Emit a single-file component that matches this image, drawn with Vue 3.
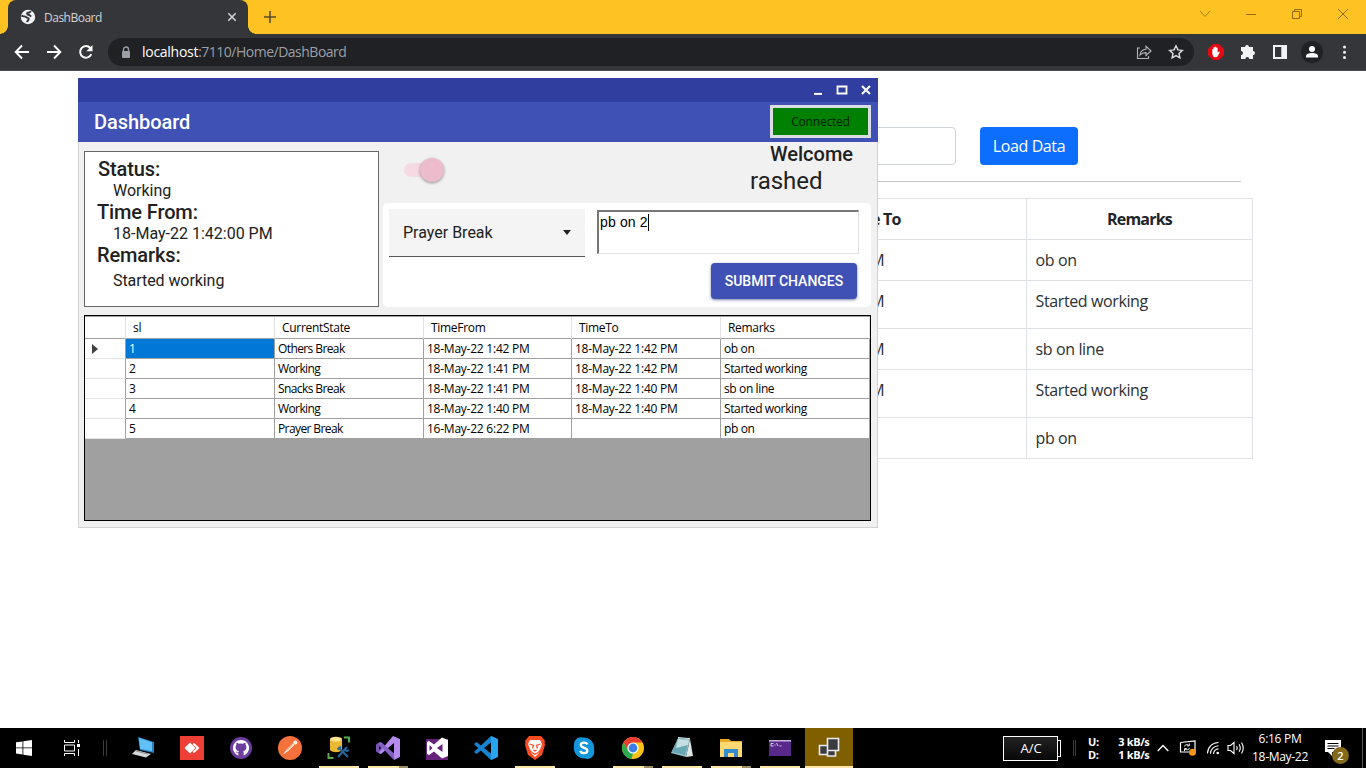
<script setup>
const pageRows = [
  { to: 'PM', remarks: 'ob on', tall: false },
  { to: 'PM', remarks: 'Started working', tall: true },
  { to: 'PM', remarks: 'sb on line', tall: false },
  { to: 'PM', remarks: 'Started working', tall: true },
  { to: '', remarks: 'pb on', tall: false },
]
const gridHeads = ['sl', 'CurrentState', 'TimeFrom', 'TimeTo', 'Remarks']
const gridRows = [
  ['1', 'Others Break', '18-May-22 1:42 PM', '18-May-22 1:42 PM', 'ob on'],
  ['2', 'Working', '18-May-22 1:41 PM', '18-May-22 1:42 PM', 'Started working'],
  ['3', 'Snacks Break', '18-May-22 1:41 PM', '18-May-22 1:40 PM', 'sb on line'],
  ['4', 'Working', '18-May-22 1:40 PM', '18-May-22 1:40 PM', 'Started working'],
  ['5', 'Prayer Break', '16-May-22 6:22 PM', '', 'pb on'],
]
</script>

<template>
  <div class="screen">
    <header class="tabstrip">
      <div class="tab">
        <svg class="globe" viewBox="0 0 16 16"><circle cx="8" cy="8" r="7.2" fill="#f1f3f4"/><path d="M1.500 6.500c1.700 1.500 3.600.4 4.700 1.600 1 1.200 2.600.5 2.600 1.900 0 1.200-1.600 1.200-1.800 3.200M10.500 2c0 1.700-1.300 1.500-2.700 1.700-1.200.3-.8 1.900.5 2 1.800.1 1.700 1.300 3 1.700" fill="none" stroke="#35363a" stroke-width="1.900"/></svg>
        <span class="tab-title">DashBoard</span>
        <svg class="tab-close" viewBox="0 0 10 10"><path d="M1.300 1.300l7.400 7.400M8.700 1.300L1.300 8.700" stroke="#d5d7da" stroke-width="1.500"/></svg>
      </div>
      <svg class="plus" viewBox="0 0 12 12"><path d="M6 0v12M0 6h12" stroke="#5b4c22" stroke-width="1.600"/></svg>
      <div class="winctl">
        <svg viewBox="0 0 12 12"><path d="M1 3l5 5.500L11 3" fill="none" stroke="#a57d19"/></svg>
        <svg viewBox="0 0 12 12"><path d="M1 6.500h10" stroke="#8d6b17"/></svg>
        <svg viewBox="0 0 12 12"><path d="M1.500 3.500h7v7h-7zM3.500 3.500v-2h7v7h-2" fill="none" stroke="#8d6b17"/></svg>
        <svg viewBox="0 0 12 12"><path d="M1 1l10 10M11 1L1 11" stroke="#8d6b17"/></svg>
      </div>
    </header>

    <div class="toolbar">
      <span class="tb"><svg viewBox="0 0 16 16"><path d="M15 8H2M8 1.500L1.700 8 8 14.500" fill="none" stroke="#fff" stroke-width="1.900"/></svg></span>
      <span class="tb"><svg viewBox="0 0 16 16"><path d="M1 8h13M8 1.500L14.300 8 8 14.500" fill="none" stroke="#fff" stroke-width="1.900"/></svg></span>
      <span class="tb"><svg viewBox="0 0 16 16"><path d="M13.300 10.200A5.800 5.800 0 1 1 12.300 4" fill="none" stroke="#fff" stroke-width="2"/><path d="M14.500 1v6.200H8.300z" fill="#fff"/></svg></span>
      <div class="omnibox">
        <svg class="lock" viewBox="0 0 10 13"><path d="M2.500 6V3.500a2.500 2.500 0 0 1 5 0V6" fill="none" stroke="#9aa0a6" stroke-width="1.400"/><rect x="1" y="5" width="8" height="7" rx="1" fill="#9aa0a6"/></svg>
        <span class="url"><b>localhost</b>:7110/Home/DashBoard</span>
        <span class="tb"><svg viewBox="0 0 16 16"><path d="M4 4H1.500v10.500h11v-2.500" fill="none" stroke="#b4b7ba" stroke-width="1.100"/><path d="M4 11c.5-4 2.500-5.700 6-5.800V2.300L15 7l-5 4.500V8.600C7.500 8.500 5.700 9 4 11z" fill="none" stroke="#b4b7ba" stroke-width="1.100"/></svg></span>
        <span class="tb"><svg viewBox="0 0 16 16"><path d="M8 1.800l1.900 4.100 4.400.5-3.300 3 .9 4.400L8 11.600l-3.900 2.200.9-4.400-3.300-3 4.400-.5z" fill="none" stroke="#dee1e4" stroke-width="1.400"/></svg></span>
      </div>
      <span class="tb"><svg viewBox="0 0 16 16"><path d="M5 0h6l5 5v6l-5 5H5l-5-5V5z" fill="#e30b13"/><path d="M4.300 8.500V5.300q.6-.8 1.200 0V3.600q.6-.8 1.300 0V3q.7-.8 1.400 0v.8q.7-.8 1.400 0v5l1.300-1.300q1-.3.900.6L9.900 12q-.8 1.200-2.600 1.200c-2 0-3-1.500-3-4.700z" fill="#fff"/></svg></span>
      <span class="tb"><svg viewBox="0 0 16 16"><path d="M5 3a2 2 0 0 1 4 0h4v4a2 2 0 1 1 0 4v4H9.300a2 2 0 0 0-4 0H1v-4a2 2 0 0 0 0-4V3z" fill="#f1f3f4"/></svg></span>
      <span class="tb"><svg viewBox="0 0 16 16"><path d="M1 1h14v14H1z" fill="#f1f3f4"/><path d="M3 3h6.300v10H3z" fill="#35363a"/></svg></span>
      <span class="tb avatar"><svg viewBox="0 0 22 22"><circle cx="11" cy="11" r="11" fill="#202124"/><circle cx="11" cy="8" r="3" fill="#fff"/><path d="M5 16.500v-1.200C5 13 8 12 11 12s6 1 6 3.300v1.200z" fill="#fff"/></svg></span>
      <span class="tb"><svg viewBox="0 0 16 16" fill="#f1f3f4"><circle cx="8.500" cy="3" r="1.500"/><circle cx="8.500" cy="8.200" r="1.500"/><circle cx="8.500" cy="13.400" r="1.500"/></svg></span>
    </div>

    <main class="page">
      <div class="controls"><div class="field"></div><div class="load">Load Data</div></div>
      <div class="rule"></div>
      <div class="ptable">
        <div class="prow head"><div>Time To</div><div>Remarks</div></div>
        <div v-for="(r, i) in pageRows" :key="i" class="prow" :class="{ tall: r.tall }">
          <div class="to">{{ r.to }}</div><div>{{ r.remarks }}</div>
        </div>
      </div>
    </main>

    <section class="window">
      <div class="titlebar">
        <svg viewBox="0 0 12 12"><path d="M2 9.900h8" stroke="#fff" stroke-width="2"/></svg>
        <svg viewBox="0 0 12 12"><path d="M1.500 2.500h9v7h-9z" fill="none" stroke="#fff" stroke-width="1.800"/></svg>
        <svg viewBox="0 0 12 12"><path d="M2 2l8 8M10 2l-8 8" stroke="#fff" stroke-width="2"/></svg>
      </div>
      <div class="appbar"><span class="app-title">Dashboard</span><div class="connected">Connected</div></div>
      <div class="wbody">
        <div class="upper">
          <div class="status">
            <div class="label l1">Status:</div><div class="value">Working</div>
            <div class="label">Time From:</div><div class="value">18-May-22 1:42:00 PM</div>
            <div class="label">Remarks:</div><div class="value last">Started working</div>
          </div>
          <div class="right">
            <div class="greet">
              <div class="switch"><i></i></div>
              <div class="who"><div class="welcome">Welcome</div><div class="user">rashed</div></div>
            </div>
            <div class="form">
              <div class="frow">
                <div class="select"><span>Prayer Break</span><svg viewBox="0 0 8 5"><path d="M0 0h8L4 5z" fill="#222"/></svg></div>
                <div class="memo"><span>pb on 2</span></div>
              </div>
              <div class="submit">SUBMIT CHANGES</div>
            </div>
          </div>
        </div>
        <div class="dgrid">
          <div class="grow ghead"><div></div><div v-for="h in gridHeads" :key="h">{{ h }}</div></div>
          <div v-for="(r, i) in gridRows" :key="i" class="grow">
            <div class="rh"><svg v-if="i === 0" viewBox="0 0 6 10"><path d="M0 0l6 5-6 5z" fill="#404040"/></svg></div>
            <div v-for="(c, j) in r" :key="j" :class="['c' + j, { sel: i === 0 && j === 0 }]">{{ c }}</div>
          </div>
        </div>
      </div>
    </section>

    <footer class="taskbar">
      <div class="start">
        <svg class="i16" viewBox="0 0 16 16"><path d="M0 2.300l6.500-.9v6.100H0zM7.300 1.300L16 0v7.500H7.300zM0 8.300h6.500v6.200L0 13.600zM7.300 8.300H16V16l-8.700-1.300z" fill="#fff"/></svg>
      </div>
      <div class="start">
        <svg class="i16" viewBox="0 0 16 16"><path d="M.5 0v2.500h10V0M.5 16v-2.500h10V16M.5 5h10v6H.5zM14.500 0v3M14.500 9v7" fill="none" stroke="#fff"/><path d="M13 4h3v3h-3z" fill="#fff"/></svg>
      </div>
      <div class="grip"></div>
      <div class="apps">
        <div class="app"><svg viewBox="0 0 24 24"><path d="M7 1l16 5v11L9 14z" fill="#2584bf"/><path d="M8 2l13 4.300v9L9 12.700z" fill="#63c0f4"/><path d="M5 14l15 4-5 3.500L1 18z" fill="#d4d9dc"/><path d="M5 15l12 3" stroke="#87939b"/></svg></div>
        <div class="app"><svg viewBox="0 0 24 24"><path d="M0 0h24v24H0z" fill="#ef4035"/><path d="M4.500 12L10 6.500l5.500 5.500-5.500 5.500z" fill="#fff"/><path d="M13.300 7.500L18 12l-4.700 4.500" fill="none" stroke="#fff" stroke-width="2"/></svg></div>
        <div class="app"><svg viewBox="0 0 24 24"><circle cx="12" cy="12" r="11" fill="#6e3d9e"/><path d="M12 4a8 8 0 0 0-2.600 15.500v-2c-2 .3-2.600-.8-3-1.500 1.500-.2 1.400 1 3 .6 0-.7.300-1.200.6-1.500-2-.3-3.400-1.400-3.400-3.800 0-1 .3-1.800.9-2.400-.3-1 .1-1.900.2-2 .9 0 1.600.4 2.200.9a8 8 0 0 1 4.200 0c.600-.5 1.300-.9 2.200-.9.1.1.5 1 .2 2 .6.600.9 1.400.9 2.400 0 2.400-1.400 3.500-3.400 3.800.4.400.6 1 .6 1.800v2.600A8 8 0 0 0 12 4z" fill="#6e3d9e"/><path d="M9.400 19.500A8 8 0 1 1 14.600 19.500v-2.900c0-.8-.2-1.300-.6-1.600 2-.3 3.400-1.400 3.400-3.800 0-1-.3-1.800-.9-2.400.2-.8.1-1.500-.2-2-.9 0-1.600.4-2.200.9a8 8 0 0 0-4.200 0c-.6-.5-1.300-.9-2.200-.9-.3.500-.4 1.200-.2 2-.6.600-.9 1.400-.9 2.400 0 2.400 1.400 3.500 3.400 3.800-.3.300-.5.700-.6 1.300-1.500.4-2-.6-2.600-1.200 0 1.200 1 2.400 2.600 2.200z" fill="#fff"/></svg></div>
        <div class="app"><svg viewBox="0 0 24 24"><circle cx="12" cy="12" r="12" fill="#f4713b"/><path d="M5 18.500l3.500-5L15 7.200l1.500 1.600-6.300 6.200z" fill="#fff3e8"/><circle cx="17.300" cy="6.500" r="2" fill="#fff3e8"/><path d="M8.500 14.500l6-5.500" stroke="#e7854f" stroke-width=".8"/></svg></div>
        <div class="app run"><svg viewBox="0 0 24 24"><path d="M3 3v11c3 3 9 3 12 0V3z" fill="#ecb731"/><ellipse cx="9" cy="3.300" rx="6" ry="2.500" fill="#ffe38a"/><path d="M17 1.500h5v5M1.500 17v5h5" fill="none" stroke="#55a94a" stroke-width="2"/><path d="M12 12l9 9M20 11l-9 10M10.500 13.500l3.500-3M18 13c0 2 2 2.500 4 1" fill="none" stroke="#2468a0" stroke-width="2.100"/></svg></div>
        <div class="app run stack"><svg viewBox="0 0 24 24"><path d="M0 8.500L4 6l3 2v8l-3 2-4-2.500z" fill="#7655b7"/><path d="M3 10v4l2-2z" fill="#000"/><path d="M17 0l7 3v18l-6 3V7L5 18l-2-1.500z" fill="#b58bee"/><path d="M2 7.500L5 6l13 11.500V24z" fill="#8661c5"/></svg></div>
        <div class="app"><svg viewBox="0 0 24 24"><path d="M1 3h22v21H1z" fill="#68217a"/><path d="M17 1.500l6 2.500v16l-6 2.500-8-7-5 3.500-2-1V6l2-1 5 3.500zM4.500 9v6L7.500 12zM12 12l5.500 4V8z" fill="#fff" fill-rule="evenodd"/></svg></div>
        <div class="app"><svg viewBox="0 0 24 24"><path d="M17 0l7 3.300v17.400L17 24 2 10l-2-2 2.500-2L17 17.500V6.500L2.500 18 0 16l17-16z" fill="#1683d0"/><path d="M17 0l7 3.300v17.400L17 24z" fill="#28a3f0"/></svg></div>
        <div class="app run"><svg viewBox="0 0 24 24"><path d="M6 0h12l2.500 3L22 5l-.5 2 .5 2-3 10-7 5-7-5L2 9l.5-2L2 5l1.500-2z" fill="#fa4b22"/><path d="M7 4h10l2 4-2 5.500-2 2.500 1 1-4 4-4-4 1-1-2-2.500L5 8z" fill="#fff"/><path d="M6.500 8l4 1.500-1 3M17.500 8l-4 1.500 1 3M10.500 14l1.500 1 1.500-1M8.500 16.500l3.500 1.700 3.500-1.700" fill="none" stroke="#f5512a" stroke-width="1.300"/></svg></div>
        <div class="app"><svg viewBox="0 0 24 24"><path d="M2 8a7 7 0 0 1 9-6.500A10.500 10.500 0 0 1 22 14a7 7 0 0 1-9 8.500A10.500 10.500 0 0 1 2 10z" fill="#1297dd"/><path d="M15.500 8.500c-.9-1.500-2-1.900-3.500-1.900-2 0-3.200 1-3.200 2.500 0 3.500 6.500 2 6.500 5.300 0 1.700-1.500 2.700-3.500 2.700-1.700 0-3-.7-3.700-2.100" fill="none" stroke="#fff" stroke-width="2.300"/></svg></div>
        <div class="app run stack"><svg viewBox="0 0 24 24"><circle cx="12" cy="12" r="11" fill="#fbc116"/><path d="M2.500 6.500A11 11 0 0 1 21.500 6.500H12L7.300 14.700z" fill="#e73c2f"/><path d="M2.500 6.500L7.300 14.700 12 17.500 10.500 23A11 11 0 0 1 2.500 6.500z" fill="#2da94f"/><circle cx="12" cy="12" r="5.600" fill="#fff"/><circle cx="12" cy="12" r="4.400" fill="#3d7de8"/></svg></div>
        <div class="app run"><svg viewBox="0 0 24 24"><path d="M8 2l12 1-4 18-15-4z" fill="#91bfc7"/><path d="M8 3l11 1-4 15-13-3z" fill="#6ba6b4"/><path d="M8 3l11 1-1 5-12 3z" fill="#c3dfe1"/><path d="M20 3l3 17-7 1z" fill="#dce7e5"/><path d="M8 1.500l12 1.200" stroke="#e7eded"/></svg></div>
        <div class="app run stack"><svg viewBox="0 0 24 24"><path d="M1 3h9l2 2h11v16H1z" fill="#e9aa28"/><path d="M1 6h22v15H1z" fill="#ffda72"/><path d="M5 13h14v8h-4v-4H9v4H5z" fill="#348bd0"/></svg></div>
        <div class="app run"><svg viewBox="0 0 24 24"><path d="M1 4h22v16H1z" fill="#58288b"/><path d="M1 4h22v1.500H1z" fill="#c7b5dc"/><path d="M5.500 7.500H3v2.500h2.500M7 8v.6M7 9.500v.6M8.500 7l1.500 3M11.500 10h2" fill="none" stroke="#e5dcef" stroke-width=".9"/></svg></div>
        <div class="app active"><svg viewBox="0 0 24 24"><path d="M2.500 9.500h8v9h-8zM10.500 14.500h8v5.500h-8zM10.500 2.500h11v12h-11z" fill="#3a3c40" stroke="#eceaf0" stroke-width="1.600"/></svg></div>
      </div>
      <div class="tray">
        <div class="battery"><div class="cell">A/C</div><i></i></div>
        <div class="grip small"></div>
        <div class="net"><div><span>U:</span><span>3 kB/s</span></div><div><span>D:</span><span>1 kB/s</span></div></div>
        <svg class="chev" viewBox="0 0 12 8"><path d="M.7 7L6 1.500 11.300 7" fill="none" stroke="#fff" stroke-width="1.300"/></svg>
        <svg class="upd" viewBox="0 0 18 16"><path d="M1.500 2.500L16 1v11M1.500 2.500v9.500H10" fill="none" stroke="#fff" stroke-width="1.200"/><path d="M5.500 6.500c.5-2.300 3-2.500 4.300-.9M10.300 3.500v2.300H8M10.500 8c-.5 2-3 2.300-4.500.9M5.500 11V8.700h2.300" fill="none" stroke="#fff"/><circle cx="13.500" cy="12.300" r="3.500" fill="#f79a12"/></svg>
        <svg class="wifi" viewBox="0 0 14 14"><path d="M1.500 12.500A11 11 0 0 1 12.500 1.500M4.500 12.700a8 8 0 0 1 8-8M7.500 12.900a5 5 0 0 1 5-5" fill="none" stroke="#fff" stroke-width="1.100"/><circle cx="11.700" cy="12" r="1.300" fill="#fff"/></svg>
        <svg class="vol" viewBox="0 0 18 14"><path d="M1 4.500h2.500L7 1.500v11L3.500 9.500H1zM9.500 5q1.300 2 0 4M12 3.200q2.500 3.800 0 7.600M14.500 1.500q3.500 5.500 0 11" fill="none" stroke="#fff" stroke-width="1.100"/></svg>
        <div class="clock"><div>6:16 PM</div><div>18-May-22</div></div>
        <div class="notif"><svg viewBox="0 0 16 16"><path d="M0 0h16v12H7v4l-4-4H0z" fill="#fff"/><path d="M2.500 3.500h11M2.500 6h11M2.500 8.500h7" stroke="#000"/></svg><b>2</b></div>
        <div class="peek"></div>
      </div>
    </footer>
  </div>
</template>

<style>
html, body { margin: 0; overflow: hidden; background: #fff; }
</style>

<style scoped>
.screen { position: relative; width: 1366px; height: 768px; display: flex; flex-direction: column; overflow: hidden; background: #fff; font-family: "Open Sans", "Noto Sans", sans-serif; }
.screen * { box-sizing: border-box; white-space: nowrap; }
svg { display: block; flex: none; }

.tabstrip { height: 34px; background: #ffc223; display: flex; align-items: flex-start; padding-left: 8px; flex: none; }
.tab { position: relative; width: 240px; height: 34px; background: #35363a; border-radius: 8px 8px 0 0; display: flex; align-items: center; padding: 0 11px 0 12px; }
.tab::before, .tab::after { content: ""; position: absolute; bottom: 0; width: 8px; height: 8px; }
.tab::before { left: -8px; background: radial-gradient(circle at 0 0, transparent 7.5px, #35363a 8px); }
.tab::after { right: -8px; background: radial-gradient(circle at 100% 0, transparent 7.5px, #35363a 8px); }
.globe { width: 16px; height: 16px; }
.tab-title { margin-left: 8px; font-size: 12px; letter-spacing: -.5px; color: #d2d4d7; flex: 1; }
.tab-close { width: 10px; height: 10px; }
.plus { width: 12px; height: 12px; margin: 11px 0 0 16px; }
.winctl { margin-left: auto; display: flex; gap: 34px; padding: 8px 17px 0 0; }
.winctl svg { width: 12px; height: 12px; }

.toolbar { height: 37px; flex: none; background: #35363a; border-bottom: 1px solid #4b4c50; display: flex; align-items: center; padding: 0 6px; }
.tb { width: 32px; display: flex; justify-content: center; flex: none; }
.tb svg { width: 16px; height: 16px; }
.avatar svg { width: 22px; height: 22px; }
.omnibox { flex: 1; margin: 0 6px; height: 28px; border-radius: 14px; background: #202124; display: flex; align-items: center; padding: 0 2px 0 13px; }
.lock { width: 10px; height: 13px; }
.url { flex: 1; margin: -1px 0 0 11px; font-size: 14px; letter-spacing: -.5px; color: #9aa0a6; }
.url b { font-weight: 400; color: #fff; letter-spacing: -.28px; }

.page { flex: 1; padding-top: 56px; display: flex; flex-direction: column; color: #2b3035; font-size: 16px; }
.controls { display: flex; gap: 24px; padding-left: 717px; }
.field { width: 239px; height: 38px; border: 1px solid #ced4da; border-radius: 4px; }
.load { width: 98px; height: 38px; border-radius: 4px; background: #0d6efd; color: #fff; text-align: center; line-height: 38px; letter-spacing: -.4px; }
.rule { margin: 16px 125px 16px 717px; height: 1px; background: #c4c6c8; }
.ptable { margin-left: 717px; width: 536px; border: 1px solid #dee2e6; border-bottom: 0; }
.prow { display: flex; height: 41px; border-bottom: 1px solid #dee2e6; line-height: 41px; letter-spacing: -.38px; }
.prow.tall { height: 48px; }
.prow > div { padding-left: 8.500px; flex: 1; }
.prow > div:first-child { flex: none; width: 309px; border-right: 1px solid #dee2e6; }
.prow > .to { padding-left: 143px; }
.head { font-weight: 700; text-align: center; letter-spacing: -.8px; color: #212529; }
.prow.head > div { padding: 0; }

.window { position: absolute; left: 78px; top: 78px; width: 800px; height: 450px; background: #f1f1f1; display: flex; flex-direction: column; font-family: Roboto, sans-serif; color: #212121; }
.titlebar { height: 24px; background: #303f9f; display: flex; align-items: center; justify-content: flex-end; gap: 12px; padding: 0 6.500px 1px 0; }
.titlebar svg { width: 12px; height: 12px; }
.appbar { height: 40px; background: #3f51b5; display: flex; align-items: center; padding: 0 7px 0 16px; justify-content: space-between; }
.app-title { font-size: 20px; font-weight: 500; color: #fff; letter-spacing: -.06px; }
.connected { width: 101px; height: 33px; margin-top: -1px; background: #008000; border: 3px solid #dadde2; text-align: center; font: 12px/28px "Open Sans", sans-serif; letter-spacing: -.2px; color: #001c00; }
.wbody { flex: 1; border: 1px solid #d2d2d2; border-top: 0; padding: 0 6px 6px 5px; display: flex; flex-direction: column; }
.upper { display: flex; height: 165px; }
.status { width: 295px; height: 156px; margin-top: 9px; background: #fff; border: 1px solid #666; padding: 5px 0 0 12px; }
.label { font-size: 20px; font-weight: 500; line-height: 25px; height: 25px; letter-spacing: -.12px; }
.l1 { padding-left: 1px; }
.value { font-size: 16px; line-height: 18px; height: 18px; padding-left: 16px; }
.value.last { padding-top: 4px; letter-spacing: -.07px; }
.right { margin-left: 4px; flex: 1; }
.greet { height: 61px; display: flex; justify-content: space-between; }
.switch { margin: 21px 0 0 21px; width: 38px; height: 14px; border-radius: 7px; background: #f5dae3; position: relative; }
.switch i { position: absolute; right: -2px; top: -5px; width: 24px; height: 24px; border-radius: 50%; background: #edbccc; box-shadow: 0 1px 3px rgba(0,0,0,.4); }
.who { width: 121px; }
.welcome { font-size: 20px; font-weight: 500; line-height: 24px; padding-left: 20px; }
.user { font-size: 24px; line-height: 30px; }
.form { height: 104px; background: #fff; border-radius: 5px; padding: 7px 12px 0 6px; display: flex; flex-direction: column; align-items: flex-start; }
.frow { display: flex; gap: 12px; height: 44px; }
.select { width: 196px; height: 48px; margin-top: -1px; background: #f4f4f4; border-bottom: 1px solid #555; display: flex; align-items: center; justify-content: space-between; padding: 0 14px; font-size: 16px; }
.select svg { width: 8px; height: 5px; }
.memo { width: 262px; height: 44px; border: 1px solid #e1e1e1; border-top: 2px solid #777; border-left: 2px solid #777; font: 14px/17px "Liberation Sans", sans-serif; letter-spacing: .15px; color: #000; padding: 2px 1px 1px; }
.memo span { display: inline-block; height: 17px; border-right: 1px solid #000; line-height: 17px; }
.submit { align-self: flex-end; margin: 9px 2px 0 0; width: 146px; height: 36px; background: #3f51b5; border-radius: 4px; color: #fff; text-align: center; line-height: 36px; font-size: 14px; font-weight: 500; box-shadow: 0 1px 3px rgba(40,50,110,.6); }
.dgrid { margin-top: 8px; height: 206px; border: 1px solid #000; background: #a0a0a0; font: 12px/20px "Open Sans", sans-serif; color: #000; padding-top: 1px; }
.grow { display: grid; grid-template-columns: 41px 149px 149px 148px 149px 149px; height: 20px; letter-spacing: -.24px; }
.grow > div { background: #fff; border-right: 1px solid #a0a0a0; border-bottom: 1px solid #a0a0a0; padding-left: 3px; height: 20px; }
.grow > .c1 { letter-spacing: -.6px; }
.grow > .c4 { letter-spacing: -.38px; }
.grow > div.rh { border-bottom-color: #e3e3e3; padding: 5px 0 0 7px; }
.rh svg { width: 6px; height: 10px; }
.grow > div.sel { background: #0078d7; color: #fff; }
.ghead { height: 22px; line-height: 22px; letter-spacing: -.3px; }
.ghead > div { height: 22px; padding-left: 7px; border-right-color: #e3e3e3; }

.taskbar { height: 40px; flex: none; background: #000; display: flex; color: #fff; }
.start { width: 48px; display: flex; align-items: center; justify-content: center; }
.i16 { width: 16px; height: 16px; }
.grip { width: 4px; height: 16px; margin: 12px 12px 0 7px; border: 1px solid #3c3c3c; border-width: 0 1px; }
.apps { display: flex; gap: 1px; }
.app { position: relative; width: 48px; height: 40px; display: flex; align-items: center; justify-content: center; }
.app svg { width: 24px; height: 24px; }
.run::after { content: ""; position: absolute; left: 4px; bottom: 0; width: 40px; height: 2px; background: #fde6a6; }
.stack::after { background: linear-gradient(90deg, #fde6a6 31px, #9c8d66 31px); }
.active { background: #7f5f00; }
.active::after { content: ""; position: absolute; left: 0; right: 0; bottom: 0; height: 2px; background: #fde6a6; }
.tray { margin-left: auto; width: 363px; display: flex; align-items: center; }
.battery { display: flex; align-items: center; }
.cell { width: 55px; height: 25px; border: 1px solid #fff; background: linear-gradient(#222, #080808); font-size: 13px; line-height: 23px; text-align: center; padding-left: 1px; }
.battery i { width: 3px; height: 17px; border: 1px solid #fff; border-left: 0; }
.grip.small { margin: 0 12px 0 12px; width: 3px; }
.net { width: 61.500px; font-size: 11px; font-weight: 700; line-height: 13px; letter-spacing: -.35px; }
.net div { display: flex; justify-content: space-between; }
.chev { width: 12px; height: 8px; margin-left: 7.500px; }
.upd { width: 18px; height: 16px; margin-left: 10px; }
.wifi { width: 14px; height: 14px; margin-left: 9px; }
.vol { width: 18px; height: 14px; margin-left: 7px; }
.clock { width: 60px; margin-left: 5px; font-size: 12px; line-height: 18px; text-align: center; letter-spacing: -.3px; }
.notif { position: relative; margin-left: 15px; width: 16px; height: 16px; }
.notif svg { width: 16px; height: 16px; }
.notif b { position: absolute; left: 7px; top: 7px; width: 17px; height: 17px; border-radius: 50%; background: #84691b; font-size: 11px; line-height: 17px; text-align: center; font-weight: 600; }
.peek { margin-left: auto; margin-right: 3px; width: 1px; height: 40px; background: #555; }
</style>
